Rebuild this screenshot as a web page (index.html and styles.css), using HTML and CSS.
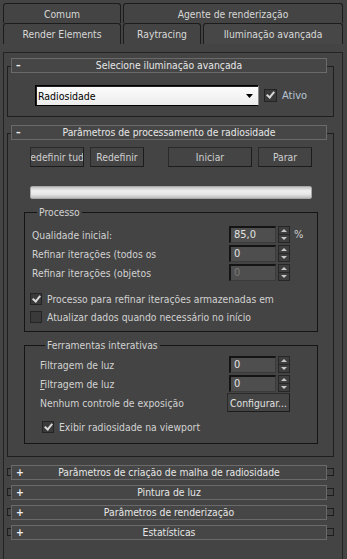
FILE: index.html
```html
<!DOCTYPE html>
<html lang="pt">

<head>
    <meta charset="UTF-8">
    <title>Iluminação avançada</title>
    <link rel="stylesheet" href="styles.css">
</head>

<body>
    <div class="tabs">
        <div class="tab-row">
            <div class="tab tab-wide">Comum</div>
            <div class="tab tab-fill">Agente de renderização</div>
        </div>
        <div class="tab-row">
            <div class="tab tab-wide">Render Elements</div>
            <div class="tab tab-ray">Raytracing</div>
            <div class="tab tab-fill active">Iluminação avançada</div>
        </div>
    </div>

    <div class="panel">
        <!-- Selecione iluminação avançada -->
        <div class="rollout first">
            <div class="rollout-head"><span class="sign">–</span><span class="title">Selecione iluminação avançada</span></div>
            <div class="select-row">
                <div class="dropdown">
                    <span>Radiosidade</span>
                    <svg width="7" height="4" viewBox="0 0 7 4"><polygon points="0,0 7,0 3.5,4" fill="#000"/></svg>
                </div>
                <label class="check"><span class="box on"></span>Ativo</label>
            </div>
        </div>

        <!-- Parâmetros de processamento -->
        <div class="rollout second">
            <div class="rollout-head"><span class="sign">–</span><span class="title">Parâmetros de processamento de radiosidade</span></div>
            <div class="btn-row">
                <button class="btn small">Redefinir tudo</button>
                <button class="btn small">Redefinir</button>
                <button class="btn wide">Iniciar</button>
                <button class="btn small">Parar</button>
            </div>
            <div class="progress"></div>

            <fieldset class="group">
                <legend>Processo</legend>
                <div class="field">
                    <span>Qualidade inicial:</span>
                    <span class="num">85,0</span>
                    <span class="spin"><i class="up"></i><i class="down"></i></span>
                    <span class="unit">%</span>
                </div>
                <div class="field">
                    <span>Refinar iterações (todos os</span>
                    <span class="num">0</span>
                    <span class="spin"><i class="up"></i><i class="down"></i></span>
                </div>
                <div class="field">
                    <span>Refinar iterações (objetos</span>
                    <span class="num dim">0</span>
                    <span class="spin"><i class="up"></i><i class="down"></i></span>
                </div>
                <label class="check opt"><span class="box on"></span>Processo para refinar iterações armazenadas em</label>
                <label class="check opt"><span class="box"></span>Atualizar dados quando necessário no início</label>
            </fieldset>

            <fieldset class="group tools">
                <legend>Ferramentas interativas</legend>
                <div class="field">
                    <span>Filtragem de luz</span>
                    <span class="num">0</span>
                    <span class="spin"><i class="up"></i><i class="down"></i></span>
                </div>
                <div class="field">
                    <span><u>F</u>iltragem de luz</span>
                    <span class="num">0</span>
                    <span class="spin"><i class="up"></i><i class="down"></i></span>
                </div>
                <div class="field">
                    <span>Nenhum controle de exposição</span>
                    <button class="btn config">Configurar...</button>
                </div>
                <label class="check opt"><span class="box on"></span>Exibir radiosidade na viewport</label>
            </fieldset>
        </div>

        <div class="rollout closed">
            <div class="rollout-head"><span class="sign">+</span><span class="title">Parâmetros de criação de malha de radiosidade</span></div>
        </div>
        <div class="rollout closed">
            <div class="rollout-head"><span class="sign">+</span><span class="title">Pintura de luz</span></div>
        </div>
        <div class="rollout closed">
            <div class="rollout-head"><span class="sign">+</span><span class="title">Parâmetros de renderização</span></div>
        </div>
        <div class="rollout closed">
            <div class="rollout-head"><span class="sign">+</span><span class="title">Estatísticas</span></div>
        </div>
    </div>
</body>

</html>
```

FILE: styles.css
```css
* {
    margin: 0;
    padding: 0;
    box-sizing: border-box;
}

body {
    width: 347px;
    height: 559px;
    overflow: hidden;
    background: #444444;
    font-family: 'DejaVu Sans Condensed', 'DejaVu Sans', sans-serif;
    font-stretch: condensed;
    font-size: 10.3px;
    color: #d2d2d2;
}

/* tabs */
.tabs {
    padding: 3px 4px 0 3px;
}

.tab-row {
    display: flex;
    gap: 2px;
}

.tab {
    height: 20px;
    display: flex;
    align-items: center;
    justify-content: center;
    background: #444444;
    border: 1px solid #1c1c1c;
    border-bottom: none;
    border-radius: 3px 3px 0 0;
    color: #d8d8d8;
}

.tab-row + .tab-row .tab {
    height: 21px;
}

.tab-wide {
    width: 118px;
}

.tab-ray {
    width: 78px;
}

.tab-fill {
    flex: 1;
}

.tab.active {
    background: #474747;
}

/* scroll panel */
.panel {
    margin: 8px 0 0 3px;
    width: 340px;
    height: 520px;
    border: 1px solid #232323;
    border-bottom: none;
    padding: 0 8px 0 3px;
}

.rollout {
    border: 1px solid #1e1e1e;
}

.rollout.first {
    margin-top: 13px;
    padding-bottom: 10px;
}

.rollout.second {
    margin-top: 16px;
    padding-bottom: 12px;
}

.rollout.closed {
    margin-top: 12px;
}

.rollout.second + .rollout.closed {
    margin-top: 11px;
}

.rollout-head {
    height: 15px;
    margin: -9px 6px 0 3px;
    display: grid;
    grid-template-columns: 18px 1fr 18px;
    align-items: center;
    background: #464646;
    border: 1px solid #6a6a6a;
    color: #e6e6e6;
    line-height: 13px;
}

.rollout.closed .rollout-head {
    margin-top: -4px;
    margin-bottom: -5px;
}

.sign {
    padding-left: 4px;
    font-weight: bold;
    color: #f0f0f0;
}

.title {
    text-align: center;
    white-space: nowrap;
}

/* selector row */
.select-row {
    display: flex;
    align-items: center;
    margin: 12px 0 0 27px;
}

.dropdown {
    width: 224px;
    height: 21px;
    display: flex;
    align-items: center;
    justify-content: space-between;
    padding: 0 5px 0 2px;
    background: linear-gradient(#fdfdfd, #ececec);
    border: 1px solid #000;
    border-right-color: #8a8a8a;
    box-shadow: inset 1px 1px 0 #222;
    color: #000;
    font-size: 10.5px;
}

.check {
    display: flex;
    align-items: center;
    gap: 5px;
}

.select-row .check {
    margin-left: 5px;
    color: #b8c4d4;
    font-size: 11px;
}

.box {
    width: 12px;
    height: 12px;
    flex: none;
    position: relative;
    background: #3a3a3a;
    border: 1px solid #242424;
}

.select-row .box {
    width: 13px;
    height: 13px;
}

.box.on::after {
    content: '';
    position: absolute;
    left: 3px;
    top: 0;
    width: 3px;
    height: 6px;
    border: solid #d8d8d8;
    border-width: 0 2px 2px 0;
    transform: rotate(40deg);
}

/* buttons */
.btn-row {
    display: flex;
    margin: 7px 0 0 22px;
}

.btn {
    height: 20px;
    display: flex;
    align-items: center;
    justify-content: center;
    overflow: hidden;
    white-space: nowrap;
    background: #444444;
    border: 1px solid #1c1c1c;
    border-top-color: #2a2a2a;
    border-left-color: #2a2a2a;
    color: #cfcfcf;
    font: inherit;
}

.btn.small {
    width: 54px;
    margin-right: 6px;
}

.btn.small:nth-child(2) {
    margin-right: 24px;
}

.btn.wide {
    width: 84px;
    margin-right: 6px;
}

.progress {
    width: 282px;
    height: 13px;
    margin: 19px 0 0 22px;
    border: 1px solid #a8a8a8;
    border-radius: 2px;
    background: linear-gradient(#c4c4c4, #efefef 35%, #e8e8e8 65%, #bdbdbd);
}

/* groups */
.group {
    width: 294px;
    margin: 7px 0 0 16px;
    border: 1px solid #151515;
    padding: 6px 0 5px 7px;
}

.group legend {
    margin-left: 5px;
    padding: 0 2px;
    line-height: 13px;
}

.group.tools {
    padding: 3px 0 7px 15px;
}

.field {
    height: 19px;
    display: grid;
    grid-template-columns: 1fr 47px 12px 25px;
    column-gap: 2px;
    align-items: center;
}

.num {
    height: 17px;
    padding-left: 3px;
    background: #4e4e4e;
    border: 1px solid #3a3a3a;
    border-top: 2px solid #141414;
    border-left: 2px solid #141414;
    color: #e2e2e2;
    font-size: 11px;
    line-height: 14px;
}

.num.dim {
    color: #7a7a7a;
}

.spin {
    height: 17px;
    display: flex;
    flex-direction: column;
    background: #2c2c2c;
    border: 1px solid #262626;
}

.spin i {
    flex: 1;
    display: flex;
    align-items: center;
    justify-content: center;
    background: #3e3e3e;
}

.spin i.up {
    border-bottom: 1px solid #262626;
}

.spin i::after {
    content: '';
    border-left: 3px solid transparent;
    border-right: 3px solid transparent;
}

.spin i.up::after {
    border-bottom: 3px solid #c8c8c8;
}

.spin i.down::after {
    border-top: 3px solid #c8c8c8;
}

.unit {
    padding-left: 2px;
    font-size: 11px;
}

.check.opt {
    height: 18px;
    margin-left: -2px;
}

.check.opt:first-of-type {
    margin-top: 8px;
}

.tools .check.opt {
    margin: 6px 0 0 2px;
}

.btn.config {
    grid-column: span 2;
    margin-left: -2px;
    height: 19px;
    color: #e0e0e0;
}
```
